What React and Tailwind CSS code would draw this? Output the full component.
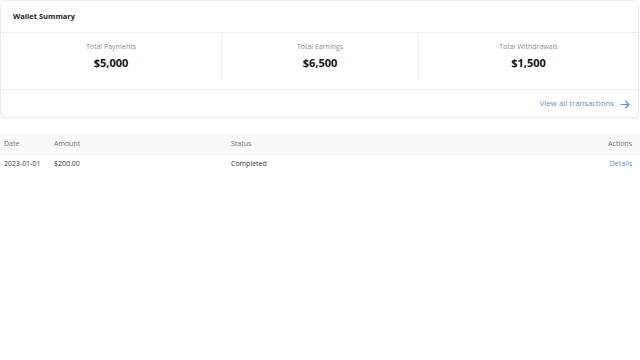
import React from "react";

export default function App() {
  const stats = [
    { label: "Total Payments", value: "$5,000", w: "w-[220px]" },
    { label: "Total Earnings", value: "$6,500", w: "flex-1 border-x border-[#eef0f2]" },
    { label: "Total Withdrawals", value: "$1,500", w: "w-[219px]" },
  ];
  return (
    <div className="w-[640px] h-[360px] bg-white text-[#333]" style={{ fontFamily: '"Open Sans", "Noto Sans", sans-serif' }}>
      <div className="w-[639px] rounded-md border border-[#e9ebee] bg-white shadow-[0_1px_2px_rgba(0,0,0,0.06)]">
        <div className="h-[32px] flex items-center px-[12px] border-b border-[#eceef1]">
          <span className="text-[7.5px] font-bold text-[#222]">Wallet Summary</span>
        </div>
        <div className="flex h-[57px] border-b border-[#eceef1]">
          {stats.map((s) => (
            <div key={s.label} className={`${s.w} flex flex-col items-center pt-[9px] mb-[10px]`}>
              <span className="text-[7px] text-[#8a8f98] leading-[10px]">{s.label}</span>
              <span className="text-[11px] font-bold text-[#111] leading-[14px] mt-[4px]">{s.value}</span>
            </div>
          ))}
        </div>
        <div className="h-[27px] flex items-center justify-end pr-[8px] pt-[1px]">
          <span className="text-[7.8px] text-[#5b8fd6]">View all transactions</span>
          <svg className="ml-[6px]" width="10" height="9" viewBox="0 0 10 9" fill="none" stroke="#5b8fd6" strokeWidth="1.1" strokeLinecap="round" strokeLinejoin="round">
            <path d="M1 4.5h8M5.5 1l3.5 3.5L5.5 8" />
          </svg>
        </div>
      </div>
      <div className="mt-[16px] text-[7px]">
        <div className="grid grid-cols-[50px_177px_1fr_auto] h-[21px] items-center bg-[#f8f9fb] border-b border-[#eceef1] pl-[4px] pr-[8px] text-[#6b7078]">
          <span>Date</span>
          <span>Amount</span>
          <span>Status</span>
          <span className="text-right">Actions</span>
        </div>
        <div className="grid grid-cols-[50px_177px_1fr_auto] h-[18px] items-center pl-[4px] pr-[8px] text-[#333]">
          <span>2023-01-01</span>
          <span>$200.00</span>
          <span>Completed</span>
          <span className="text-right text-[#5b8fd6]">Details</span>
        </div>
      </div>
    </div>
  );
}
